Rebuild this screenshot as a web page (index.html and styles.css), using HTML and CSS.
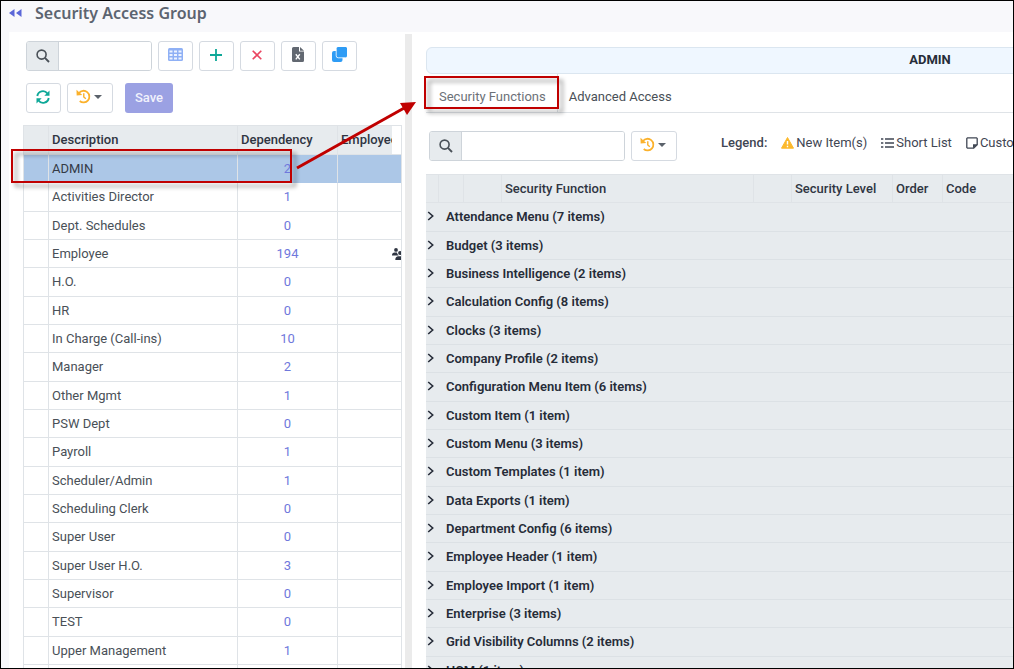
FILE: index.html
```html
<!DOCTYPE html>
<html lang="en">
<head>
<meta charset="utf-8">
<title>Security Access Group</title>
<link rel="stylesheet" href="styles.css">
</head>
<body>
<svg class="defs" aria-hidden="true">
  <symbol id="i-search" viewBox="0 0 14 14"><circle cx="5.6" cy="5.6" r="4.5" fill="none" stroke="currentColor" stroke-width="1.6"/><path d="M8.9 8.9 13 13" stroke="currentColor" stroke-width="1.9"/></symbol>
  <symbol id="i-history" viewBox="0 0 16 16"><path d="M3.200 4.200A6.200 6.200 0 1 1 4 12.800" fill="none" stroke="currentColor" stroke-width="1.900"/><path d="M.5.800.700 6.800l6-.5z" fill="currentColor"/><path d="M8.300 4.500v4l2.200 1.900" fill="none" stroke="currentColor" stroke-width="1.500"/></symbol>
  <symbol id="i-chevron" viewBox="0 0 8 10"><path d="M1.200 1 5.700 5 1.200 9" fill="none" stroke="currentColor" stroke-width="1.600"/></symbol>
</svg>
<div class="app">
  <header class="titlebar">
    <button class="collapse" aria-label="Collapse"><svg width="13" height="8" viewBox="0 0 13 8"><path d="M5.500 0v8L0 4zM12.500 0v8L7 4z" fill="currentColor"/></svg></button>
    <h1>Security Access Group</h1>
  </header>
  <main class="panes">
    <section class="groups">
      <div class="toolbar">
        <div class="search">
          <label for="find-group" aria-label="Search groups"><svg width="14" height="14"><use href="#i-search"/></svg></label>
          <input id="find-group" type="text">
        </div>
        <button class="btn grid" aria-label="Grid"><svg width="15" height="13" viewBox="0 0 15 13"><rect width="15" height="13" rx="1.500" fill="currentColor"/><path d="M1.500 2.500h3v2h-3zM6 2.500h3v2H6zM10.500 2.500h3v2h-3zM1.500 6h3v2h-3zM6 6h3v2H6zM10.500 6h3v2h-3zM1.500 9.500h3v2h-3zM6 9.500h3v2H6zM10.500 9.500h3v2h-3z" fill="#edf3ff"/></svg></button>
        <button class="btn green" aria-label="Add"><svg width="12" height="12" viewBox="0 0 12 12"><path d="M6 0v12M0 6h12" stroke="currentColor" stroke-width="1.800"/></svg></button>
        <button class="btn red" aria-label="Delete"><svg width="10" height="10" viewBox="0 0 10 10"><path d="m.7.7 8.600 8.600M9.300.7.7 9.300" stroke="currentColor" stroke-width="1.600"/></svg></button>
        <button class="btn slate" aria-label="Export to Excel"><svg width="12" height="15" viewBox="0 0 12 15"><path d="M1.500 0H7v4.500h5v9a1.500 1.500 0 0 1-1.500 1.500h-9A1.500 1.500 0 0 1 0 13.500v-12A1.500 1.500 0 0 1 1.500 0zM8 0l4 3.700H8z" fill="currentColor"/><path d="m3.800 7.200 4 5.200M7.800 7.200l-4 5.200" stroke="#fff" stroke-width="1.400"/></svg></button>
        <button class="btn blue" aria-label="Copy"><svg width="15" height="15" viewBox="0 0 15 15"><rect y="4" width="10.500" height="11" rx="2" fill="currentColor"/><rect x="4.200" y="-.5" width="11.300" height="11.300" rx="2" fill="currentColor" stroke="#fff" stroke-width=".8"/></svg></button>
      </div>
      <div class="toolbar second">
        <button class="btn green" aria-label="Refresh"><svg width="14" height="14" viewBox="0 0 14 14"><path d="M1.300 6A5.600 5.600 0 0 1 11.400 3.500M12.700 8A5.600 5.600 0 0 1 2.600 10.500" fill="none" stroke="currentColor" stroke-width="1.900"/><path d="M13.500.6v5.200H8.300zM.5 13.400V8.200h5.200z" fill="currentColor"/></svg></button>
        <button class="btn menu" aria-label="History"><svg class="amber" width="15" height="15"><use href="#i-history"/></svg><span class="caret"></span></button>
        <button class="save">Save</button>
      </div>
      <div class="group-grid">
        <table>
          <colgroup><col class="g-mark"><col class="g-desc"><col class="g-dep"><col class="g-emp"><col class="g-end"></colgroup>
          <thead><tr><th></th><th>Description</th><th>Dependency</th><th>Employees</th><th class="blank"></th></tr></thead>
          <tbody>
            <tr class="selected"><td></td><td>ADMIN</td><td><a href="#">2</a></td><td colspan="2"></td></tr>
            <tr><td></td><td>Activities Director</td><td><a href="#">1</a></td><td colspan="2"></td></tr>
            <tr><td></td><td>Dept. Schedules</td><td><a href="#">0</a></td><td colspan="2"></td></tr>
            <tr><td></td><td>Employee</td><td><a href="#">194</a></td><td colspan="2" class="people"><svg width="9" height="12" viewBox="0 0 9 12"><circle cx="4" cy="1.900" r="1.900" fill="currentColor"/><circle cx="8" cy="5" r="1.900" fill="currentColor"/><path d="M0 7.500C0 5.300 1.200 4.500 2.500 4.500h2.400c.4 1.200.7 2 1.800 3zM3.300 12c0-2.400 1.200-3.700 3-3.700H9V12z" fill="currentColor"/></svg></td></tr>
            <tr><td></td><td>H.O.</td><td><a href="#">0</a></td><td colspan="2"></td></tr>
            <tr><td></td><td>HR</td><td><a href="#">0</a></td><td colspan="2"></td></tr>
            <tr><td></td><td>In Charge (Call-ins)</td><td><a href="#">10</a></td><td colspan="2"></td></tr>
            <tr><td></td><td>Manager</td><td><a href="#">2</a></td><td colspan="2"></td></tr>
            <tr><td></td><td>Other Mgmt</td><td><a href="#">1</a></td><td colspan="2"></td></tr>
            <tr><td></td><td>PSW Dept</td><td><a href="#">0</a></td><td colspan="2"></td></tr>
            <tr><td></td><td>Payroll</td><td><a href="#">1</a></td><td colspan="2"></td></tr>
            <tr><td></td><td>Scheduler/Admin</td><td><a href="#">1</a></td><td colspan="2"></td></tr>
            <tr><td></td><td>Scheduling Clerk</td><td><a href="#">0</a></td><td colspan="2"></td></tr>
            <tr><td></td><td>Super User</td><td><a href="#">0</a></td><td colspan="2"></td></tr>
            <tr><td></td><td>Super User H.O.</td><td><a href="#">3</a></td><td colspan="2"></td></tr>
            <tr><td></td><td>Supervisor</td><td><a href="#">0</a></td><td colspan="2"></td></tr>
            <tr><td></td><td>TEST</td><td><a href="#">0</a></td><td colspan="2"></td></tr>
            <tr><td></td><td>Upper Management</td><td><a href="#">1</a></td><td colspan="2"></td></tr>
            <tr><td></td><td></td><td></td><td colspan="2"></td></tr>
          </tbody>
        </table>
      </div>
    </section>
    <div class="splitter"></div>
    <section class="detail">
      <div class="detail-body">
        <h2 class="banner">ADMIN</h2>
        <nav class="tabs"><a class="active" href="#">Security Functions</a><a href="#">Advanced Access</a></nav>
        <div class="toolbar functions-bar">
          <div class="search wide">
            <label for="find-function" aria-label="Search functions"><svg width="14" height="14"><use href="#i-search"/></svg></label>
            <input id="find-function" type="text">
          </div>
          <button class="btn menu" aria-label="History"><svg class="amber" width="15" height="15"><use href="#i-history"/></svg><span class="caret"></span></button>
          <div class="legend">
            <b>Legend:</b>
            <span><svg width="13" height="12" viewBox="0 0 13 12"><path d="M6.500.5 12.500 11.200H.5z" fill="#fcb92c" stroke="#fcb92c" stroke-linejoin="round"/><path d="M6.500 4v3.600M6.500 8.700v1.500" stroke="#fff" stroke-width="1.400"/></svg>New Item(s)</span>
            <span><svg width="13" height="12" viewBox="0 0 13 12"><path d="M4 2h9M4 6h9M4 10h9M0 2h2.300M0 6h2.300M0 10h2.300" stroke="currentColor" stroke-width="1.700"/></svg>Short List</span>
            <span><svg width="12" height="12" viewBox="0 0 12 12"><path d="M1.500.8h9l.7.700v6.200L7.700 11.200H1.500l-.7-.7v-9z" fill="none" stroke="currentColor" stroke-width="1.300"/><path d="M7 11.500V7.200h4.500z" fill="currentColor"/></svg>Custom</span>
          </div>
        </div>
        <table class="functions">
          <colgroup><col class="f-a"><col class="f-b"><col class="f-c"><col class="f-name"><col class="f-d"><col class="f-level"><col class="f-order"><col></colgroup>
          <thead><tr><th></th><th></th><th></th><th>Security Function</th><th></th><th>Security Level</th><th>Order</th><th>Code</th></tr></thead>
          <tbody>
            <tr><td colspan="8"><svg width="8" height="10"><use href="#i-chevron"/></svg>Attendance Menu (7 items)</td></tr>
            <tr><td colspan="8"><svg width="8" height="10"><use href="#i-chevron"/></svg>Budget (3 items)</td></tr>
            <tr><td colspan="8"><svg width="8" height="10"><use href="#i-chevron"/></svg>Business Intelligence (2 items)</td></tr>
            <tr><td colspan="8"><svg width="8" height="10"><use href="#i-chevron"/></svg>Calculation Config (8 items)</td></tr>
            <tr><td colspan="8"><svg width="8" height="10"><use href="#i-chevron"/></svg>Clocks (3 items)</td></tr>
            <tr><td colspan="8"><svg width="8" height="10"><use href="#i-chevron"/></svg>Company Profile (2 items)</td></tr>
            <tr><td colspan="8"><svg width="8" height="10"><use href="#i-chevron"/></svg>Configuration Menu Item (6 items)</td></tr>
            <tr><td colspan="8"><svg width="8" height="10"><use href="#i-chevron"/></svg>Custom Item (1 item)</td></tr>
            <tr><td colspan="8"><svg width="8" height="10"><use href="#i-chevron"/></svg>Custom Menu (3 items)</td></tr>
            <tr><td colspan="8"><svg width="8" height="10"><use href="#i-chevron"/></svg>Custom Templates (1 item)</td></tr>
            <tr><td colspan="8"><svg width="8" height="10"><use href="#i-chevron"/></svg>Data Exports (1 item)</td></tr>
            <tr><td colspan="8"><svg width="8" height="10"><use href="#i-chevron"/></svg>Department Config (6 items)</td></tr>
            <tr><td colspan="8"><svg width="8" height="10"><use href="#i-chevron"/></svg>Employee Header (1 item)</td></tr>
            <tr><td colspan="8"><svg width="8" height="10"><use href="#i-chevron"/></svg>Employee Import (1 item)</td></tr>
            <tr><td colspan="8"><svg width="8" height="10"><use href="#i-chevron"/></svg>Enterprise (3 items)</td></tr>
            <tr><td colspan="8"><svg width="8" height="10"><use href="#i-chevron"/></svg>Grid Visibility Columns (2 items)</td></tr>
            <tr><td colspan="8"><svg width="8" height="10"><use href="#i-chevron"/></svg>HCM (1 item)</td></tr>
          </tbody>
        </table>
      </div>
    </section>
  </main>
  <svg class="callouts" width="600" height="220" viewBox="0 0 600 220" aria-hidden="true">
    <g class="marks">
      <rect x="11" y="149" width="279" height="32"/>
      <rect x="424" y="76" width="133" height="31"/>
    </g>
    <path class="arrow-line" d="M296 167 405 106"/>
    <path class="arrow-head" d="M415 101 399 102 406 114z"/>
  </svg>
</div>
</body>
</html>
```

FILE: styles.css
```css
* { box-sizing: border-box; }
body { margin: 0; font-family: Roboto, "Liberation Sans", sans-serif; font-size: 13px; line-height: 18px; color: #495057; }
a { color: inherit; text-decoration: none; }
button { font: inherit; cursor: pointer; }
svg { display: block; flex: none; }
.defs { position: absolute; width: 0; height: 0; }

.app { position: relative; display: flex; flex-direction: column; height: 100vh; border: 1px solid #000; background: #f8f8fb; overflow: hidden; }
.titlebar { flex: none; display: flex; align-items: center; gap: 13px; height: 31px; padding: 0 8px 8px; }
.titlebar h1 { margin: 0; font-family: "Noto Sans", sans-serif; font-size: 16px; line-height: 22px; font-weight: 600; color: #5c6470; }
.collapse { padding: 0; border: 0; background: none; color: #5b67d8; }

.panes { flex: 1; display: flex; min-height: 0; margin-left: 8px; background: #fff; }
.groups { flex: none; width: 393px; padding: 9px 0 0 14px; overflow: hidden; }
.splitter { flex: none; width: 7px; margin: 2px 0 0 3px; background: #ebebeb; }
.detail { flex: 1; min-width: 0; padding: 15px 0 0 14px; overflow: hidden; }
.detail-body { min-width: 1008px; }

.toolbar { display: flex; align-items: center; gap: 6px; padding-left: 3px; }
.toolbar.second { margin-top: 12px; }
.search { display: flex; width: 126px; height: 30px; border: 1px solid #ced4da; border-radius: 3px; overflow: hidden; }
.search.wide { width: 196px; }
.search label { flex: none; display: flex; align-items: center; justify-content: center; width: 32px; background: #e7ebee; border-right: 1px solid #ced4da; color: #495057; }
.search input { flex: 1; min-width: 0; padding: 0 6px; border: 0; font: inherit; outline: 0; }
.btn { display: flex; align-items: center; justify-content: center; width: 35px; height: 30px; padding: 0 1px 3px 0; border: 1px solid #d5dae1; border-radius: 3px; background: #fff; }
.btn.menu { width: 46px; gap: 3px; padding-right: 2px; }
.grid { color: #8fb0f5; }
.green { color: #0ea898; }
.red { color: #ea4560; }
.slate { color: #626871; }
.blue { color: #2e9cf5; }
.amber { color: #fbb12b; }
.caret { border: 4px solid transparent; border-top-color: #5b626b; border-bottom: 0; }
.save { width: 48px; height: 30px; margin-left: 6px; padding: 0; border: 0; border-radius: 3px; background: #9ba1e3; color: #f1f2fc; font-weight: 500; }

table { table-layout: fixed; border-collapse: separate; border-spacing: 0; }
th { height: 29px; padding: 0 0 0 3px; text-align: left; font-weight: 500; color: #2f3542; white-space: nowrap; overflow: hidden; background: #e7ebee; }
td { height: 28px; padding: 0 0 0 3px; }

.group-grid { margin-top: 12px; border-right: 1px solid #dfe3e7; overflow: hidden; }
.group-grid table { width: 100%; }
.g-mark { width: 26px; }
.g-desc { width: 189px; }
.g-dep { width: 100px; }
.g-emp { width: 54px; }
.group-grid th, .group-grid td { border: 0 solid #dfe3e7; border-width: 0 1px 1px 0; }
.group-grid th { height: 30px; border-top-width: 1px; }
.group-grid th:nth-child(4), .group-grid th:nth-child(5), .group-grid td:last-child { border-right: 0; }
.group-grid .blank { background: #fff; }
.group-grid td:first-child, .group-grid th:first-child { border-left-width: 1px; }
.group-grid td:nth-child(3) { padding: 0; text-align: center; color: #6f78dc; }
.group-grid tr:nth-child(3n + 2) td { height: 29px; }
.group-grid .selected td { background: #acc7e7; color: #343a46; border-bottom-color: #acc7e7; }
.group-grid .selected td:nth-child(3) { color: #6f78dc; }
.group-grid .people svg { margin-left: auto; color: #2f3542; }

.banner { margin: 0; height: 27px; border: 1px solid #dbe6f0; border-radius: 6px; background: #eff7ff; text-align: center; font-size: 13px; line-height: 24px; font-weight: 700; color: #262c38; }
.tabs { display: flex; height: 39px; border-bottom: 1px solid #dfe3e7; }
.tabs a { padding: 14px 11px 0; color: #495057; }
.tabs .active { padding-left: 13px; color: #6c7178; border-right: 1px solid #dfe3e7; }
.functions-bar { margin: 18px 0 13px; }
.legend { display: flex; gap: 14px; margin: 0 0 6px 38px; color: #3f4653; white-space: nowrap; }
.legend b { font-weight: 500; }
.legend span { display: flex; align-items: center; gap: 2px; }

.functions { width: 100%; }
.f-a { width: 13px; }
.f-b { width: 25px; }
.f-c { width: 38px; }
.f-name { width: 252px; }
.f-d { width: 38px; }
.f-level { width: 101px; }
.f-order { width: 50px; }
.functions th { border: 1px solid #dfe3e7; border-left: 0; }
.functions td { padding-left: 1px; border-bottom: 1px solid #dce1e5; background: #e7ebee; font-weight: 600; color: #262c38; }
.functions td svg { display: inline-block; margin-right: 11px; }
.functions tr:nth-child(3n + 1) td { height: 29px; }

.callouts { position: absolute; left: 0; top: 0; pointer-events: none; }
.marks { fill: none; stroke: #c00000; stroke-width: 2; filter: drop-shadow(4px 4px 2px rgba(0, 0, 0, .4)); }
.arrow-line { stroke: #c00000; stroke-width: 3; }
.arrow-head { fill: #c00000; }
```
